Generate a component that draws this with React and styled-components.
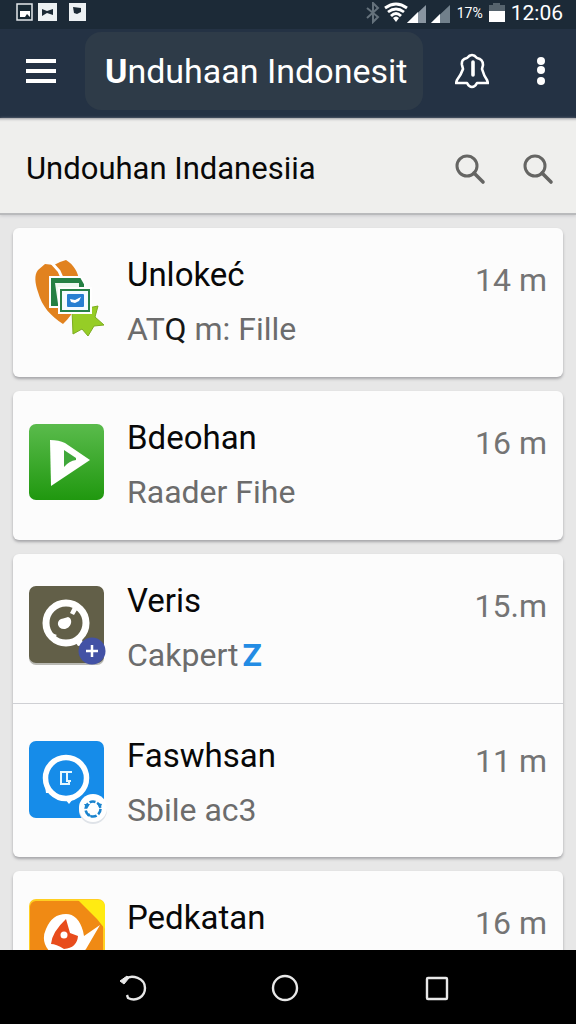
import React from 'react';
import styled, { createGlobalStyle } from 'styled-components';

const Dark = styled.span`
    color: #161616;
`

const rows = [
    [{ title: 'Unlokeć', text: <>AT<Dark>Q</Dark> m: Fille</>, time: '14 m', icon: 'gallery' }],
    [{ title: 'Bdeohan', text: 'Raader Fihe', time: '16 m', icon: 'play' }],
    [
        { title: 'Veris', text: 'Cakpert', tag: 'Z', time: '15.m', icon: 'disc' },
        { title: 'Faswhsan', text: 'Sbile ac3', time: '11 m', icon: 'ring' }
    ],
    [{ title: 'Pedkatan', time: '16 m', icon: 'bird' }]
];

const GalleryIcon = () => (
    <AppIcon viewBox="0 0 76 80">
        <path d="M16 4L9 10C5 15 6 23 9 32C13 47 22 56 34 64C40 58 44 53 46 46L50 20C49 12 45 5 37 0L31 2L25 5Z" fill="#e1821f" />
        <path d="M21 1L30 11L34 20" stroke="#fff" strokeWidth="3" fill="none" />
        <path d="M52 42L59 48L69 46L66 57L75 65L65 66L59 76L53 69L44 74L43 50Z" fill="#96cd26" stroke="#7dac20" strokeWidth="1" />
        <path d="M21 17H52L56 24V47H21Z" fill="#258044" stroke="#fff" strokeWidth="2" />
        <path d="M26 23H50V29H34V44H29Z" fill="#eff8f1" />
        <rect x="30" y="28" width="32" height="25" fill="#278148" stroke="#fff" strokeWidth="2" />
        <rect x="33" y="31" width="26" height="19" fill="#f3fbff" />
        <rect x="38" y="34" width="17" height="13" rx="1" fill="#277fd1" />
        <path d="M41 39L46 40L52 37L50 41L46 43L42 42Z" fill="#fff" />
    </AppIcon>
);

const PlayIcon = () => (
    <AppIcon viewBox="0 0 76 80">
        <defs>
            <linearGradient id="green" x1="0" y1="0" x2="0" y2="1">
                <stop offset="0" stopColor="#5abb4c" />
                <stop offset="1" stopColor="#20980f" />
            </linearGradient>
        </defs>
        <rect y="1" width="75" height="76" rx="7" fill="url(#green)" />
        <path d="M21 17Q30 17 36 20L61 37L22 63Z" fill="#fff" />
        <path d="M35 27L47 35V37Q40 38 35 44Z" fill="#40a83b" />
    </AppIcon>
);

const DiscIcon = () => (
    <AppIcon viewBox="0 0 76 80">
        <rect y="2" width="75" height="77" rx="7" fill="#b9b9b3" />
        <rect y="0" width="75" height="77" rx="7" fill="#625f48" />
        <circle cx="37" cy="37" r="20" fill="none" stroke="#fff" strokeWidth="7" />
        <path d="M39 31C45 33 42 43 35 43C28 43 27 35 32 33C35 32 37 32 39 31Z" fill="#fff" />
        <path d="M41 27L44 21L48 24L45 29ZM20 46L28 49L23 53Z" fill="#fff" />
        <path d="M44 53L51 49L55 59L49 60Z" fill="#fff" />
        <circle cx="63" cy="65" r="13.5" fill="#4352a5" />
        <path d="M63 59V71M57 65H69" stroke="#fff" strokeWidth="2.5" />
    </AppIcon>
);

const RingIcon = () => (
    <AppIcon viewBox="0 0 76 80">
        <rect y="0" width="75" height="77" rx="7" fill="#168ce9" />
        <circle cx="37" cy="37" r="20.5" fill="none" stroke="#fff" strokeWidth="5.5" />
        <path d="M16 45L21 52L17 52ZM36 58L44 58L40 63Z" fill="#fff" />
        <path d="M43 31H32V43H40V40M38 31V40H42" fill="none" stroke="#e5f9ff" strokeWidth="2" />
        <circle cx="64" cy="69" r="14" fill="#dfe3e8" />
        <circle cx="64" cy="67" r="14" fill="#fff" />
        <circle cx="64" cy="68" r="7.5" fill="none" stroke="#1b84ce" strokeWidth="2.6" strokeDasharray="6 1.9" />
        <path d="M55 63L61 63L58 68ZM68 62L73 63L71 68ZM60 72L63 76L58 75Z" fill="#1b84ce" />
    </AppIcon>
);

const BirdIcon = () => (
    <AppIcon viewBox="0 4 76 80">
        <rect y="0" width="76" height="78" rx="7" fill="#ffcf22" />
        <rect x="1" y="2" width="73" height="75" rx="6" fill="#f08a14" />
        <path d="M49 1H69Q76 1 76 9V30L68 20Z" fill="#ffeb12" />
        <path d="M71 26L57 50L52 56L44 59Q31 63 22 54Q11 43 17 30Q23 15 37 15Q49 15 54 32L55 37Z" fill="#fff" />
        <path d="M37 20L41 34L49 37Q48 49 35 50Q27 45 22 45Q23 33 37 20Z" fill="#e84c1c" />
        <circle cx="35" cy="36" r="3.5" fill="#fff" />
    </AppIcon>
);

const icons = {
    gallery: GalleryIcon,
    play: PlayIcon,
    disc: DiscIcon,
    ring: RingIcon,
    bird: BirdIcon
};

const SearchIcon = () => (
    <svg width="32" height="32" viewBox="0 0 32 32" fill="none" stroke="#656563">
        <circle cx="13" cy="13" r="10" strokeWidth="3" />
        <path d="M20 20L29 29" strokeWidth="3.6" strokeLinecap="round" />
    </svg>
);

const StatusBar = () => (
    <Status>
        <svg width="72" height="20" viewBox="0 0 72 20">
            <rect x="1" y="1" width="15" height="16" fill="#172833" stroke="#e3e8ec" strokeWidth="1.5" />
            <path d="M4 8H14V14L11 11L9 14H4Z" fill="#fff" />
            <rect x="22" width="19" height="18" fill="#edf1f3" />
            <path d="M26 6L31 8L37 6V12L31 10L26 13Z" fill="#1c2a35" />
            <rect x="53" width="17" height="18" fill="#edf1f3" />
            <path d="M57 4L65 5V9L61 11L58 10Z" fill="#1c2a35" />
        </svg>
        <Signals>
            <svg width="86" height="22" viewBox="0 0 86 22">
                <path d="M2 6L13 15L8 20V1L13 6L2 16" fill="none" stroke="#65727c" strokeWidth="2" />
                <g fill="none" stroke="#fff" strokeWidth="2.8">
                    <path d="M20 6Q31 -2 42 6M23 10Q31 4 39 10M26 14Q31 9 36 14" />
                </g>
                <path d="M28 16Q31 13 34 16L31 20Z" fill="#fff" />
                <path d="M42 21L61 3V21Z" fill="#8995a0" />
                <path d="M42 21L53 10V21Z" fill="#fff" />
                <path d="M66 21L85 3V21Z" fill="#71808b" />
                <path d="M66 21L75 12V21Z" fill="#fff" />
            </svg>
            <Percent>17%</Percent>
            <svg width="16" height="20" viewBox="0 0 16 20">
                <path d="M0 2H4V0H11V2H16V10H0Z" fill="#56636d" />
                <path d="M0 8H16V19H0Z" fill="#fff" />
            </svg>
            <Clock>12:06</Clock>
        </Signals>
    </Status>
);

const ListItem = ({ item, last }) => {
    const Icon = icons[item.icon];

    return (
        <Row $last={last}>
            <Icon />
            <Info>
                <Title>{item.title}</Title>
                <Text>{item.text}{item.tag && <Tag>{item.tag}</Tag>}</Text>
            </Info>
            <Time>{item.time}</Time>
        </Row>
    );
};

const App = () => (
    <Page>
        <GlobalStyle />
        <StatusBar />
        <Header>
            <IconButton aria-label="Menu">
                <svg width="30" height="26" viewBox="0 0 30 26" stroke="#fff" strokeWidth="4">
                    <path d="M0 3H30M0 13H30M0 23H30" />
                </svg>
            </IconButton>
            <Heading><b>U</b>nduhaan Indonesit</Heading>
            <HeaderActions>
                <IconButton aria-label="Notifications">
                    <svg width="34" height="36" viewBox="0 0 34 36" fill="none" stroke="#fff" strokeLinecap="round" strokeLinejoin="round">
                        <path d="M12 5Q17 -1 22 5Q28 6 28 12L27 16Q29 23 32 27L33 30H22Q20 34 17 34Q14 34 12 30H1L2 27Q6 22 8 16L7 12Q6 6 12 5Z" strokeWidth="2.6" />
                        <path d="M18 9V22" strokeWidth="3.6" />
                    </svg>
                </IconButton>
                <IconButton aria-label="More">
                    <svg width="8" height="28" viewBox="0 0 8 28" fill="#fff">
                        <circle cx="4" cy="4" r="4" />
                        <circle cx="4" cy="13" r="4" />
                        <circle cx="4" cy="24" r="4" />
                    </svg>
                </IconButton>
            </HeaderActions>
        </Header>
        <SubHeader>
            <SubTitle>Undouhan Indanesiia</SubTitle>
            <Tools>
                <IconButton aria-label="Search"><SearchIcon /></IconButton>
                <IconButton aria-label="Search all"><SearchIcon /></IconButton>
            </Tools>
        </SubHeader>
        <List>
            {rows.map((group, i) => (
                <Card key={i}>
                    {group.map((item, j) => <ListItem key={item.title} item={item} last={j > 0} />)}
                </Card>
            ))}
        </List>
        <NavBar>
            <IconButton aria-label="Back">
                <svg width="28" height="28" viewBox="0 0 28 28" fill="none" stroke="#e8e8e8" strokeWidth="2.4">
                    <path d="M6 5C13 0 26 4 26 14C26 23 17 28 9 24L8 21" />
                    <path d="M1 7L8 2L10 4L5 10Z" fill="#e8e8e8" strokeWidth="1" />
                </svg>
            </IconButton>
            <IconButton aria-label="Home">
                <svg width="28" height="28" viewBox="0 0 28 28" fill="none" stroke="#e8e8e8" strokeWidth="2.4">
                    <circle cx="14" cy="14" r="12" />
                </svg>
            </IconButton>
            <IconButton aria-label="Recent apps">
                <svg width="28" height="28" viewBox="0 0 28 28" fill="none" stroke="#e8e8e8" strokeWidth="2.4">
                    <rect x="4" y="4" width="20" height="21" rx="1" />
                </svg>
            </IconButton>
        </NavBar>
    </Page>
);

const GlobalStyle = createGlobalStyle`
    * {
        box-sizing: border-box;
    }
    body {
        margin: 0;
        font-family: Roboto, "Liberation Sans", sans-serif;
        background: #e7e7e7;
    }
    svg {
        display: block;
        flex: none;
    }
`

const Page = styled.div`
    display: flex;
    flex-direction: column;
    height: 100vh;
`

const Status = styled.div`
    display: flex;
    justify-content: space-between;
    flex: none;
    height: 29px;
    padding: 3px 13px 0 16px;
    background: #1c2a37;
    color: #fff;
`

const Signals = styled.div`
    display: flex;
    gap: 6px;
    height: 20px;
    align-items: center;
`

const Percent = styled.span`
    font-size: 14px;
`

const Clock = styled.span`
    font-size: 21px;
`

const Header = styled.header`
    display: flex;
    align-items: center;
    flex: none;
    height: 89px;
    padding: 0 31px 6px 26px;
    background: #243244;
`

const IconButton = styled.button`
    flex: none;
    padding: 0;
    border: none;
    background: none;
    cursor: pointer;
`

const Heading = styled.h1`
    flex: 1;
    margin: 0 32px 0 29px;
    padding: 0 0 0 20px;
    border-radius: 16px;
    background: #2e3b48;
    color: #fff;
    font-size: 34px;
    font-weight: 400;
    line-height: 78px;
    white-space: nowrap;
`

const HeaderActions = styled.div`
    display: flex;
    align-items: center;
    gap: 48px;
`

const SubHeader = styled.div`
    display: flex;
    align-items: center;
    justify-content: space-between;
    flex: none;
    height: 97px;
    padding: 6px 22px 0 26px;
    background: #efefed;
    border-bottom: 2px solid #b9babc;
    box-shadow: inset 0 4px 3px -3px #9a9a9e, 0 1px 3px #c9c9cc;
`

const SubTitle = styled.h2`
    margin: 0;
    color: #080808;
    font-size: 31px;
    font-weight: 400;
`

const Tools = styled.div`
    display: flex;
    gap: 36px;
`

const List = styled.main`
    display: flex;
    flex-direction: column;
    flex: 1;
    gap: 14px;
    min-height: 0;
    padding: 13px 13px 0;
    overflow: hidden;
`

const Card = styled.section`
    flex: none;
    border-radius: 6px;
    background: #fcfcfc;
    box-shadow: 0 2px 3px #a5a5a8;
`

const Row = styled.article`
    display: flex;
    align-items: flex-start;
    padding: ${props => props.$last ? "25px 16px 20px" : "20px 16px 21px"};
    border-top: ${props => props.$last ? "1px solid #cfd0d4" : "none"};
`

const AppIcon = styled.svg`
    width: 76px;
    height: 80px;
    margin-top: 12px;
    overflow: visible;
`

const Info = styled.div`
    flex: 1;
    min-width: 0;
    margin-left: 22px;
    line-height: 54px;
    white-space: nowrap;
`

const Title = styled.div`
    color: #080808;
    font-size: 33px;
`

const Text = styled.div`
    color: #6c6c6c;
    font-size: 32px;
`

const Tag = styled.b`
    margin-left: 4px;
    color: #238ce4;
`

const Time = styled.time`
    margin-top: 5px;
    color: #747474;
    font-size: 32px;
    line-height: 54px;
`

const NavBar = styled.nav`
    display: flex;
    align-items: center;
    justify-content: center;
    gap: 124px;
    flex: none;
    height: 74px;
    padding: 2px 6px 0 0;
    background: #000;
`

export default App;
